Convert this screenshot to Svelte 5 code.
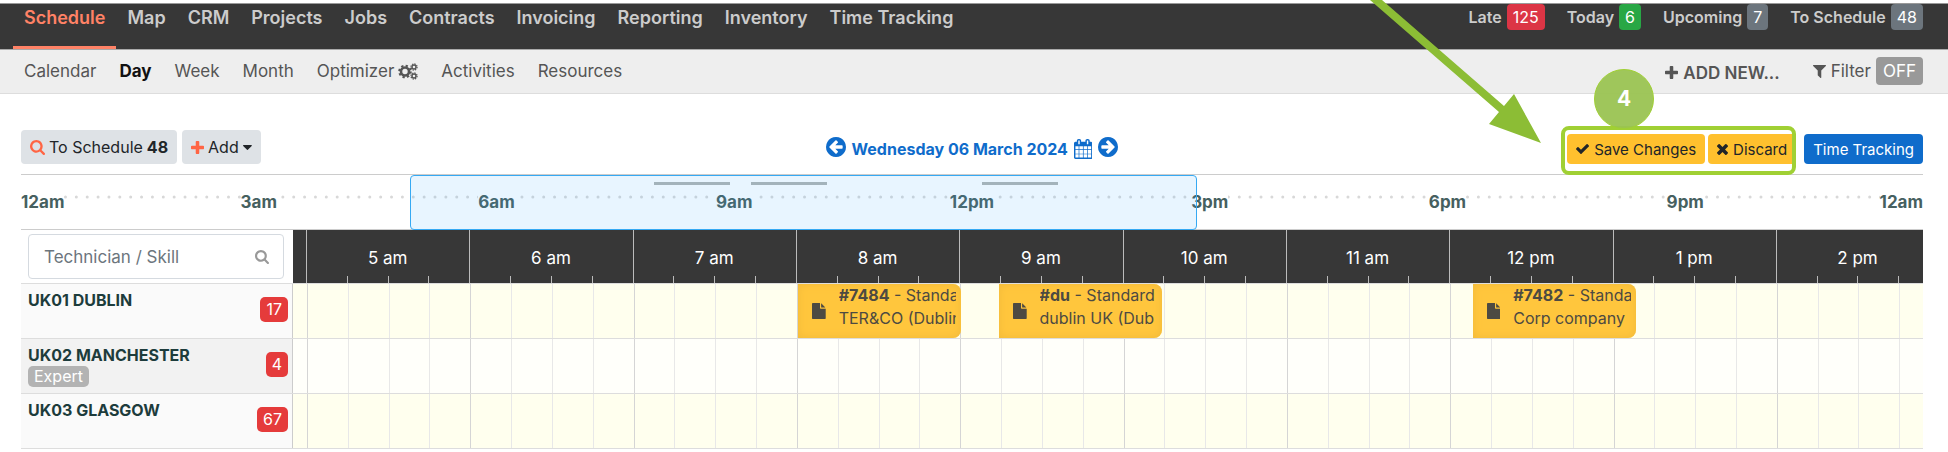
<script lang="ts">
	const icons = {
		search: { box: "64 128 1664 1664", d: "M1216 832q0-185-131.5-316.5t-316.5-131.5-316.5 131.5-131.5 316.5 131.5 316.5 316.5 131.5 316.5-131.5 131.5-316.5zm512 832q0 52-38 90t-90 38q-54 0-90-38l-343-342q-179 124-399 124-143 0-273.5-55.5t-225-150-150-225-55.5-273.5 55.5-273.5 150-225 225-150 273.5-55.5 273.5 55.5 225 150 150 225 55.5 273.5q0 220-124 399l343 343q37 37 37 90z" },
		plus: { box: "192 128 1408 1408", d: "M1600 736v192q0 40-28 68t-68 28h-416v416q0 40-28 68t-68 28h-192q-40 0-68-28t-28-68v-416h-416q-40 0-68-28t-28-68v-192q0-40 28-68t68-28h416v-416q0-40 28-68t68-28h192q40 0 68 28t28 68v416h416q40 0 68 28t28 68z" },
		check: { box: "121 334 1550 1188", d: "M1671 566q0 40-28 68l-724 724-136 136q-28 28-68 28t-68-28l-136-136-362-362q-28-28-28-68t28-68l136-136q28-28 68-28t68 28l294 295 656-657q28-28 68-28t68 28l136 136q28 28 28 68z" },
		times: { box: "302 366 1188 1188", d: "M1490 1322q0 40-28 68l-136 136q-28 28-68 28t-68-28l-294-294-294 294q-28 28-68 28t-68-28l-136-136q-28-28-28-68t28-68l294-294-294-294q-28-28-28-68t28-68l136-136q28-28 68-28t68 28l294 294 294-294q28-28 68-28t68 28l136 136q28 28 28 68t-28 68l-294 294 294 294q28 28 28 68z" },
		caret: { box: "384 640 1024 576", d: "M1408 704q0 26-19 45l-448 448q-19 19-45 19t-45-19l-448-448q-19-19-19-45t19-45 45-19h896q26 0 45 19t19 45z" },
		filter: { box: "192 256 1408 1408", d: "M1595 295q17 41-14 70l-493 493v742q0 42-39 59-13 5-25 5-27 0-45-19l-256-256q-19-19-19-45v-486l-493-493q-31-29-14-70 17-39 59-39h1280q42 0 59 39z" },
		file: { box: "128 0 1536 1792", d: "M1152 512v-472q22 14 36 28l408 408q14 14 28 36h-472zm-128 32q0 40 28 68t68 28h544v1056q0 40-28 68t-68 28h-1344q-40 0-68-28t-28-68v-1600q0-40 28-68t68-28h800v544z" },
		arrow: { box: "128 128 1536 1536", d: "M1408 960v-128q0-26-19-45t-45-19h-502l189-189q19-19 19-45t-19-45l-91-91q-18-18-45-18t-45 18l-362 362-91 91q-18 18-18 45t18 45l91 91 362 362q18 18 45 18t45-18l91-91q18-18 18-45t-18-45l-189-189h502q26 0 45-19t19-45zm256-64q0 209-103 385.5t-279.5 279.5-385.5 103-385.5-103-279.5-279.5-103-385.5 103-385.5 279.5-279.5 385.5-103 385.5 103 279.5 279.5 103 385.5z" },
		calendar: { box: "64 0 1664 1792", d: "M192 1664h288v-288h-288v288zm352 0h320v-288h-320v288zm-352-352h288v-320h-288v320zm352 0h320v-320h-320v320zm-352-384h288v-288h-288v288zm736 736h320v-288h-320v288zm-384-736h320v-288h-320v288zm768 736h288v-288h-288v288zm-384-352h320v-320h-320v320zm-352-864v-288q0-13-9.5-22.5t-22.5-9.5h-64q-13 0-22.5 9.5t-9.5 22.5v288q0 13 9.5 22.5t22.5 9.5h64q13 0 22.5-9.5t9.5-22.5zm736 864h288v-320h-288v320zm-384-384h320v-288h-320v288zm384 0h288v-288h-288v288zm32-480v-288q0-13-9.5-22.5t-22.5-9.5h-64q-13 0-22.5 9.5t-9.5 22.5v288q0 13 9.5 22.5t22.5 9.5h64q13 0 22.5-9.5t9.5-22.5zm384-64v1280q0 52-38 90t-90 38h-1408q-52 0-90-38t-38-90v-1280q0-52 38-90t90-38h128v-96q0-66 47-113t113-47h64q66 0 113 47t47 113v96h384v-96q0-66 47-113t113-47h64q66 0 113 47t47 113v96h128q52 0 90 38t38 90z" },
	};

	const modules = ["Schedule", "Map", "CRM", "Projects", "Jobs", "Contracts", "Invoicing", "Reporting", "Inventory", "Time Tracking"];
	const views = ["Calendar", "Day", "Week", "Month", "Optimizer", "Activities", "Resources"];
	const counters = [
		{ label: "Late", count: 125, tone: "red" },
		{ label: "Today", count: 6, tone: "green" },
		{ label: "Upcoming", count: 7, tone: "slate" },
		{ label: "To Schedule", count: 48, tone: "slate" },
	];

	const marks = ["12am", "3am", "6am", "9am", "12pm", "3pm", "6pm", "9pm", "12am"];
	// percent of the 24h strip
	const range = { from: 20.45, size: 41.4 };
	const busy = [33.3, 38.4, 50.5];

	// the day grid shows just under ten hours, starting shortly before 5 am
	const firstHour = 5;
	const hourWidth = 10.02;
	const hours = ["5 am", "6 am", "7 am", "8 am", "9 am", "10 am", "11 am", "12 pm", "1 pm", "2 pm"];

	const technicians = [
		{
			name: "UK01 DUBLIN",
			skill: "",
			count: 17,
			jobs: [
				{ start: 8, id: "#7484", type: "Standard", customer: "TER&CO (Dublin)" },
				{ start: 9.23, id: "#du", type: "Standard", customer: "dublin UK (Dub" },
				{ start: 12.13, id: "#7482", type: "Standard", customer: "Corp company" },
			],
		},
		{ name: "UK02 MANCHESTER", skill: "Expert", count: 4, jobs: [] },
		{ name: "UK03 GLASGOW", skill: "", count: 67, jobs: [] },
	];

	let search = "";
</script>

{#snippet icon(name)}
	<svg class="icon {name}" viewBox={icons[name].box} aria-hidden="true"><path d={icons[name].d} /></svg>
{/snippet}

<header class="topbar">
	<nav class="modules">
		{#each modules as item, i}
			<a href="#{item}" class:active={i === 0}>{item}</a>
		{/each}
	</nav>
	<div class="counters">
		{#each counters as c}
			<a href="#{c.label}">{c.label} <span class="count {c.tone}">{c.count}</span></a>
		{/each}
	</div>
</header>

<div class="subbar">
	<nav class="views">
		{#each views as view}
			<a href="#{view}" class:current={view === "Day"}>
				{view}
				{#if view === "Optimizer"}
					<svg class="cogs" viewBox="0 0 20 17" fill="none" stroke="currentColor" aria-hidden="true">
						<circle cx="7" cy="8.5" r="4" stroke-width="2.6" />
						<circle cx="7" cy="8.5" r="5.8" stroke-width="2" stroke-dasharray="2.28 2.27" />
						<circle cx="16" cy="4" r="2" stroke-width="1.4" />
						<circle cx="16" cy="4" r="3.1" stroke-width="1.2" stroke-dasharray="1.4 1.03" />
						<circle cx="16" cy="13" r="2" stroke-width="1.4" />
						<circle cx="16" cy="13" r="3.1" stroke-width="1.2" stroke-dasharray="1.4 1.03" />
					</svg>
				{/if}
			</a>
		{/each}
	</nav>
	<div class="tools">
		<button class="add-new">{@render icon("plus")} ADD NEW...</button>
		<button class="filter">{@render icon("filter")} Filter <span class="off">OFF</span></button>
	</div>
</div>

<main>
	<div class="toolbar">
		<div class="left">
			<button class="btn grey">{@render icon("search")} To Schedule <b>48</b></button>
			<button class="btn grey">{@render icon("plus")} Add {@render icon("caret")}</button>
		</div>
		<div class="date">
			<button aria-label="Previous day">{@render icon("arrow")}</button>
			<button class="day">Wednesday 06 March 2024 {@render icon("calendar")}</button>
			<button class="next" aria-label="Next day">{@render icon("arrow")}</button>
		</div>
		<div class="right">
			<div class="pending">
				<button class="btn amber">{@render icon("check")} Save Changes</button>
				<button class="btn amber">{@render icon("times")} Discard</button>
				<svg class="pointer" viewBox="0 0 172 144" aria-hidden="true">
					<path d="M0 0H12L134 106L144 94L171 143L119 124L129 112Z" />
				</svg>
				<span class="outline"></span>
				<span class="step">4</span>
			</div>
			<button class="btn blue">Time Tracking</button>
		</div>
	</div>

	<div class="strip">
		<svg class="dots" aria-hidden="true"><line x1="0" y1="2" x2="100%" y2="2" pathLength="1750" /></svg>
		<div class="marks">
			{#each marks as mark}
				<div class="mark"><span>{mark}</span></div>
			{/each}
		</div>
		<div class="range" style="left: {range.from}%; width: {range.size}%"></div>
		{#each busy as left}
			<span class="busy" style="left: {left}%"></span>
		{/each}
	</div>

	<div class="planner">
		<div class="row head">
			<div class="who">
				<label class="search-box">
					<input type="text" placeholder="Technician / Skill" aria-label="Technician / Skill" bind:value={search} />
					{@render icon("search")}
				</label>
			</div>
			<div class="track">
				<div class="lead"></div>
				{#each hours as hour}
					<div class="hour" style="flex-basis: {hourWidth}%">
						<span>{hour}</span>
						<i></i><i></i><i></i><i></i>
					</div>
				{/each}
			</div>
		</div>
		{#each technicians as tech}
			<div class="row">
				<div class="who">
					<div>
						<div class="name">{tech.name}</div>
						{#if tech.skill}<span class="skill">{tech.skill}</span>{/if}
					</div>
					<span class="load">{tech.count}</span>
				</div>
				<div class="track">
					<div class="lead"></div>
					{#each hours as hour}
						<div class="hour" style="flex-basis: {hourWidth}%">
							<i></i><i></i><i></i><i></i>
						</div>
					{/each}
					{#each tech.jobs as job}
						<div class="job" style="left: calc(15px + {(job.start - firstHour) * hourWidth}%); width: {hourWidth}%">
							{@render icon("file")}
							<div class="info">
								<div><b>{job.id}</b> - {job.type}</div>
								<div>{job.customer}</div>
							</div>
						</div>
					{/each}
				</div>
			</div>
		{/each}
	</div>
</main>

<style>
	:global(body) {
		margin: 0;
		background: #fff;
		font-family: Inter, "Liberation Sans", sans-serif;
		font-size: 17px;
		color: #212529;
		overflow-x: hidden;
	}

	a {
		color: inherit;
		text-decoration: none;
	}

	button {
		font: inherit;
		color: inherit;
		background: none;
		border: 0;
		padding: 0;
		white-space: nowrap;
	}

	.icon {
		height: 13px;
		fill: currentColor;
		flex: none;
	}

	.topbar {
		display: flex;
		justify-content: space-between;
		margin-top: 3px;
		padding: 0 25px 0 13px;
		border-top: 1px solid #999;
		border-bottom: 1px solid #aaa;
		background: #373737;
		color: #ccc;
		font-weight: 600;
	}

	.modules {
		display: flex;
		font-size: 18px;
	}

	.modules a {
		padding: 0 11px;
		line-height: 27px;
		height: 42px;
		border-bottom: 3px solid transparent;
	}

	.modules .active {
		color: #ff8266;
		border-color: #ff8266;
	}

	.counters {
		display: flex;
		align-items: flex-start;
		gap: 22px;
		font-size: 16px;
		line-height: 26px;
	}

	.counters a {
		display: flex;
		gap: 5px;
	}

	.count {
		padding: 0 6px;
		border-radius: 4px;
		color: #fff;
		font-weight: 400;
	}

	.red {
		background: #dc3545;
	}

	.green {
		background: #28a745;
	}

	.slate {
		background: #6c757d;
	}

	.subbar {
		display: flex;
		justify-content: space-between;
		align-items: center;
		height: 42px;
		padding: 0 25px 1px 24px;
		border-bottom: 1px solid #ddd;
		background: #eee;
		color: #555;
	}

	.views {
		display: flex;
		gap: 23px;
	}

	.views a {
		display: flex;
		align-items: center;
		gap: 4px;
	}

	.views .current {
		color: #111;
		font-weight: 700;
	}

	.cogs {
		width: 20px;
		height: 17px;
	}

	.tools {
		display: flex;
		align-items: center;
		gap: 33px;
	}

	.tools button {
		display: flex;
		align-items: center;
		gap: 5px;
	}

	.tools .add-new {
		padding-top: 3px;
		font-weight: 600;
	}

	.off {
		padding: 0 7px;
		border-radius: 4px;
		background: #999;
		color: #fff;
		line-height: 28px;
	}

	main {
		padding: 36px 25px 0 21px;
	}

	.toolbar {
		display: grid;
		grid-template-columns: 1fr auto 1fr;
		height: 44px;
		border-bottom: 1px solid #ccc;
		font-size: 16px;
	}

	.left,
	.right {
		display: flex;
		align-items: flex-start;
		gap: 5px;
	}

	.right {
		justify-content: flex-end;
		gap: 8px;
		padding-top: 4px;
		font-size: 15px;
	}

	.btn {
		display: flex;
		align-items: center;
		gap: 5px;
		height: 30px;
		padding: 0 9px;
		border-radius: 4px;
	}

	.grey {
		gap: 4px;
		height: 34px;
		background: #dee2e6;
	}

	.grey .icon {
		color: #ff6544;
	}

	.grey .search {
		height: 15px;
	}

	.grey .caret {
		height: 5px;
		color: #212529;
	}

	.amber {
		background: #ffc02e;
	}

	.amber .check {
		height: 10px;
	}

	.amber .times {
		height: 11px;
	}

	.blue {
		background: #0f6ccb;
		color: #fff;
	}

	.date {
		display: flex;
		align-items: flex-start;
		gap: 6px;
		padding-top: 7px;
		color: #0f6ccb;
		font-weight: 700;
	}

	.date button {
		display: flex;
		align-items: center;
		gap: 6px;
	}

	.date .day {
		padding-top: 2px;
	}

	.date .arrow {
		height: 20px;
	}

	.date .calendar {
		height: 20px;
	}

	.next {
		transform: scaleX(-1);
	}

	.pending {
		position: relative;
		display: flex;
		gap: 3px;
	}

	.outline {
		position: absolute;
		inset: -8px 0 -11px -6px;
		border: 4px solid #a0d034;
		border-radius: 8px;
	}

	.step {
		position: absolute;
		left: 27px;
		top: -65px;
		width: 60px;
		box-sizing: border-box;
		border: 1px solid #a0d034;
		border-radius: 50%;
		background: rgba(154, 195, 82, 0.95);
		color: #fff;
		font-size: 21px;
		font-weight: 700;
		line-height: 58px;
		text-align: center;
	}

	.pointer {
		position: absolute;
		left: -197px;
		top: -134px;
		width: 172px;
		height: 144px;
		fill: #8cbd35;
	}

	.strip {
		position: relative;
		height: 54px;
		border-bottom: 1px solid #ccc;
		color: #46605f;
		font-weight: 700;
	}

	.dots {
		position: absolute;
		left: 1px;
		top: 20px;
		width: 100%;
		height: 4px;
	}

	.dots line {
		stroke: #d8d8d8;
		stroke-width: 3;
		stroke-linecap: round;
		stroke-dasharray: 0 10;
	}

	.marks {
		position: relative;
		display: flex;
		justify-content: space-between;
		padding-top: 17px;
		line-height: 21px;
	}

	.mark {
		display: flex;
		justify-content: center;
		width: 0;
	}

	.mark span {
		background: #fff;
	}

	.mark:first-child {
		justify-content: flex-start;
	}

	.mark:last-child {
		justify-content: flex-end;
	}

	.range {
		position: absolute;
		top: 0;
		bottom: -1px;
		box-sizing: border-box;
		border: 1px solid #36a9f3;
		border-radius: 4px;
		background: rgba(64, 175, 255, 0.12);
	}

	.busy {
		position: absolute;
		top: 7px;
		width: 4%;
		height: 3px;
		background: #a3b3bb;
	}

	.row {
		display: flex;
		height: 54px;
		border-bottom: 1px solid #ddd;
	}

	.head {
		height: 53px;
	}

	.who {
		display: flex;
		justify-content: space-between;
		flex: none;
		box-sizing: border-box;
		width: 272px;
		padding: 6px 4px 0 7px;
		border-right: 1px solid #ccc;
		background: #fafafa;
	}

	.row:nth-child(3) .who {
		background: #f2f2f2;
	}

	.row.head .who {
		padding: 4px 8px 4px 7px;
		border-color: #fff;
		background: #fff;
	}

	.search-box {
		display: flex;
		align-items: center;
		flex: 1;
		min-width: 0;
		padding: 0 14px 0 15px;
		border: 1px solid #d5dae0;
		border-radius: 4px;
		color: #999;
	}

	.search-box input {
		flex: 1;
		min-width: 0;
		padding: 0;
		border: 0;
		outline: 0;
		background: none;
		font: inherit;
	}

	.search-box input::placeholder {
		color: #6c757d;
	}

	.search-box .icon {
		height: 14px;
	}

	.name {
		color: #1d3c3c;
		font-size: 16px;
		font-weight: 700;
		line-height: 21px;
	}

	.skill {
		display: inline-block;
		padding: 0 6px;
		border-radius: 5px;
		background: #b3b3b3;
		color: #fff;
		font-size: 16px;
		line-height: 21px;
	}

	.load {
		align-self: flex-start;
		margin-top: 7px;
		padding: 0 6px;
		border-radius: 5px;
		background: #e53b3b;
		color: #fff;
		font-size: 16px;
		line-height: 25px;
	}

	.track {
		position: relative;
		display: flex;
		flex: 1;
		min-width: 0;
		overflow: hidden;
		background: #ffffee;
	}

	.row:nth-child(3) .track {
		background: #fffffa;
	}

	.row.head .track {
		background: #373737;
		color: #fff;
	}

	.lead {
		flex: 0 0 14px;
	}

	.head .lead {
		flex-basis: 13px;
	}

	.hour {
		position: relative;
		display: flex;
		flex-grow: 0;
		flex-shrink: 0;
	}

	.hour i {
		flex: 1;
		border-left: 1px solid #e8e8e8;
	}

	.hour i:first-of-type {
		border-color: #d5d5d5;
	}

	.head .hour i {
		align-self: flex-end;
		height: 7px;
		border-color: #bbb;
	}

	.head .hour i:first-of-type {
		height: 100%;
	}

	.hour span {
		position: absolute;
		inset: 0;
		line-height: 56px;
		text-align: center;
	}

	.job {
		position: absolute;
		top: 0;
		bottom: 0;
		display: flex;
		align-items: center;
		gap: 13px;
		box-sizing: border-box;
		padding: 0 5px 0 14px;
		border-radius: 0 8px 8px 0;
		background: #ffc63d;
		box-shadow: inset 0 0 8px #f0b93a;
		color: #4d4a42;
		font-size: 16px;
		line-height: 23px;
	}

	.job .file {
		height: 16px;
	}

	.info {
		align-self: flex-start;
		overflow: hidden;
		white-space: nowrap;
	}
</style>
